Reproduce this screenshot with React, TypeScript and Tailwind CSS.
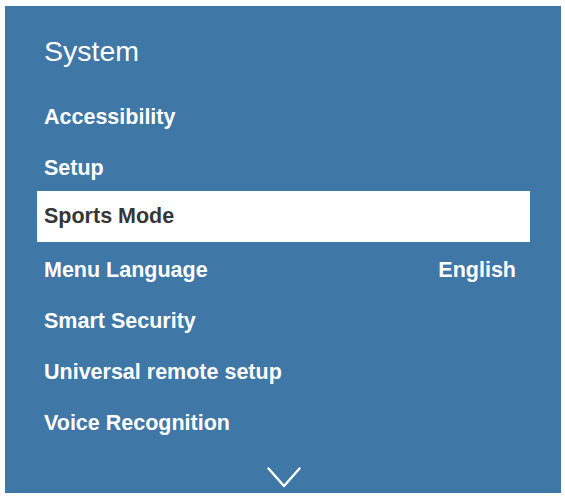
import React from "react";

interface Item {
  label: string;
  value?: string;
}

const items: Item[] = [
  { label: "Accessibility" },
  { label: "Setup" },
  { label: "Sports Mode" },
  { label: "Menu Language", value: "English" },
  { label: "Smart Security" },
  { label: "Universal remote setup" },
  { label: "Voice Recognition" },
];

const selected = "Sports Mode";

const App = () => {
  return (
    <div className="min-h-[498px] w-[565px] bg-white pl-[5px] pt-[6px] font-['Liberation_Sans',Arial,sans-serif]">
      <div className="flex h-[487px] w-[556px] flex-col bg-[#3f77a6]">
        {/* Panel title */}
        <h1 className="ml-[39px] mt-[29px] text-[28.5px] leading-[32px] font-normal text-white">
          System
        </h1>

        <ul className="ml-[32px] mt-[25px] w-[493px]">
          {items.map((item) => {
            const active = item.label === selected;
            return (
              <li
                key={item.label}
                className={`flex h-[51px] items-center justify-between pl-[7px] pr-[14px] text-[21.5px] font-bold ${
                  active ? "-mt-[3px] mb-[3px] bg-white text-[#363636]" : "text-white"
                }`}
              >
                <span>{item.label}</span>
                {item.value && <span>{item.value}</span>}
              </li>
            );
          })}
        </ul>

        <div className="mt-[18px] flex justify-center pl-[1px]">
          <svg width="34" height="21" viewBox="0 0 34 21" fill="none">
            <path
              d="M1.5 1.5 L17 19 L32.5 1.5"
              stroke="white"
              strokeWidth="2.4"
              strokeLinecap="round"
              strokeLinejoin="round"
            />
          </svg>
        </div>
      </div>
    </div>
  );
};

export default App;
